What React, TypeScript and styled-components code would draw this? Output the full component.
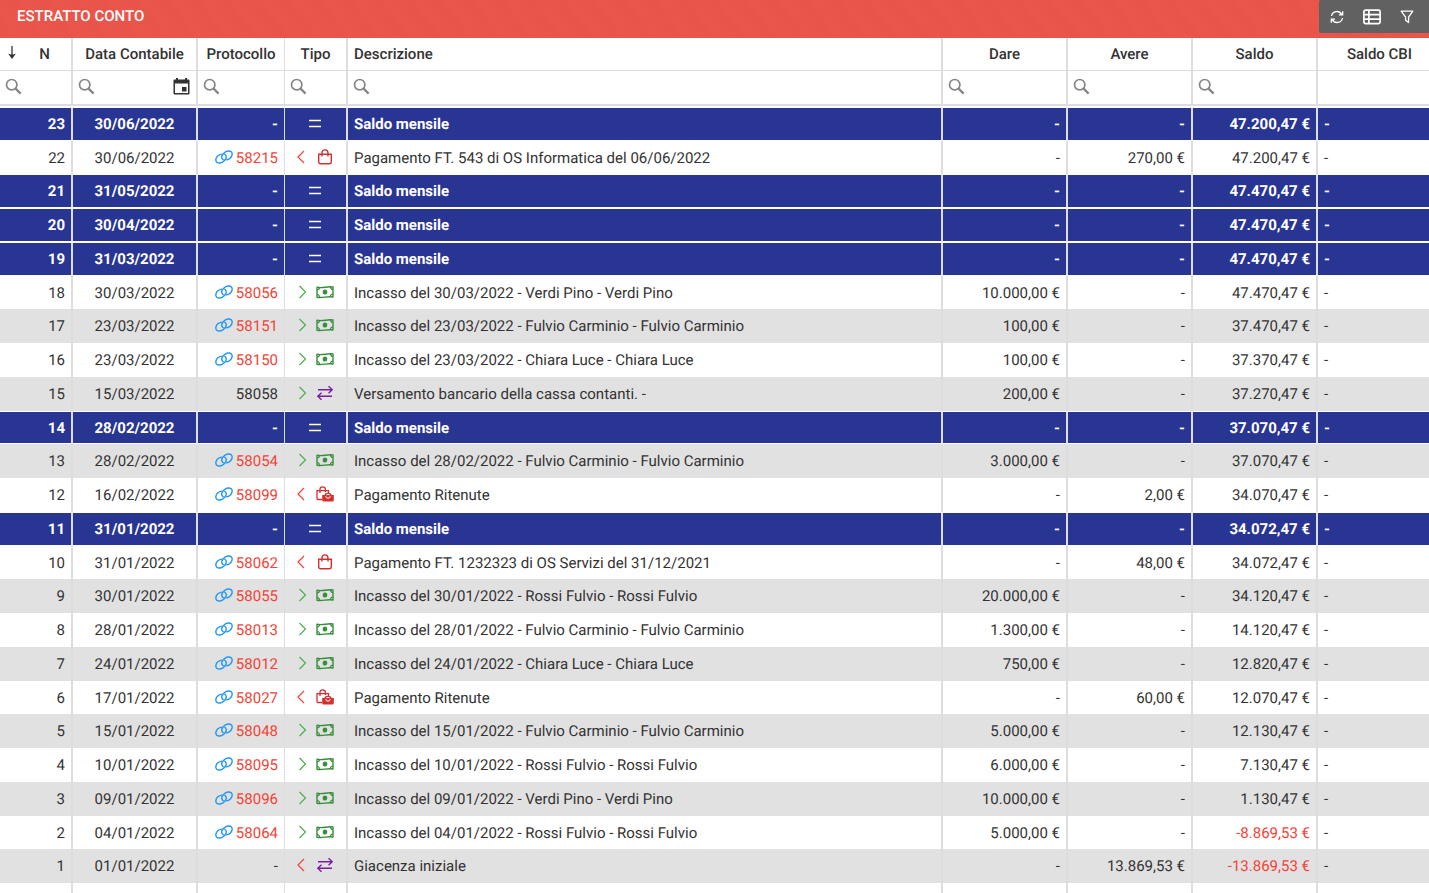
import React from "react";
import styled, { createGlobalStyle, css } from "styled-components";

const Global = createGlobalStyle`
  * { box-sizing: border-box; }
  body {
    margin: 0;
    background: #fff;
    color: #333;
    font-family: Roboto, "Liberation Sans", sans-serif;
    font-size: 15px;
    text-rendering: geometricPrecision;
  }
`;

const Page = styled.main`
  overflow: hidden;
  min-height: 100vh;
  display: flex;
  flex-direction: column;
`;

const TitleBar = styled.header`
  display: flex;
  justify-content: space-between;
  align-items: flex-start;
  height: 38px;
  padding-left: 17px;
  background: repeating-linear-gradient(52deg, #e9554b 0, #e8544a 8px, #ea564c 16px, #e9554b 24px);
`;

const Title = styled.h1`
  margin: 0;
  font-size: 15px;
  line-height: 32px;
  font-weight: 500;
  color: #fff;
`;

const Toolbar = styled.div`
  display: flex;
  align-items: center;
  height: 33px;
  width: 110px;
  padding-right: 4px;
  background: #616161;
  border-radius: 2px 0 0 2px;
`;

const ToolButton = styled.button`
  flex: 1;
  height: 32px;
  padding: 0;
  border: 0;
  background: none;
  color: #fff;
  display: flex;
  align-items: center;
  justify-content: center;
`;

const Table = styled.table`
  width: calc(100% + 13px);
  table-layout: fixed;
  border-collapse: separate;
  border-spacing: 0;
`;

type Align = "left" | "center" | "right";
type Edge = "none" | "wide";

const edges = css<{ $edge: Edge; $first?: boolean }>`
  border-style: solid;
  border-color: #ddd;
  border-width: 0;
  border-left-width: ${(p) => (p.$first || p.$edge === "none" ? 0 : 1)}px;
  border-right-width: 1px;
`;

const HeadCell = styled.th<{ $align: Align; $edge: Edge; $first?: boolean }>`
  ${edges}
  position: relative;
  height: 33px;
  padding: 0 6px 0 ${(p) => (p.$first ? 24 : 6)}px;
  border-bottom-width: 1px;
  font-weight: 500;
  line-height: 20px;
  text-align: ${(p) => p.$align};
  white-space: nowrap;
`;

const SortMark = styled.span`
  position: absolute;
  left: 7px;
  top: 7px;
  line-height: 0;
`;

const FilterCell = styled.td<{ $edge: Edge; $first?: boolean }>`
  ${edges}
  height: 35px;
  padding: 0 6px 2px 5px;
  border-bottom: 2px solid #ddd;
`;

const FilterBox = styled.label`
  display: flex;
  align-items: center;
  gap: 4px;
  color: #858585;
`;

const FilterInput = styled.input`
  flex: 1;
  min-width: 0;
  width: 0;
  height: 24px;
  padding: 0;
  border: 0;
  outline: 0;
  background: none;
  font: inherit;
`;

const DateButton = styled.button`
  padding: 0;
  border: 0;
  background: none;
  line-height: 0;
  color: #333;
`;

const Spacer = styled.tbody`
  td { height: 1px; padding: 0; }
`;

const Cell = styled.td<{ $align: Align; $edge: Edge; $first?: boolean; $negative?: boolean }>`
  ${edges}
  padding: 0 6px;
  line-height: 20px;
  text-align: ${(p) => p.$align};
  white-space: nowrap;
  color: ${(p) => (p.$negative ? "#f44336" : "inherit")};
`;

const Row = styled.tr<{ $tone: "monthly" | "plain" | "shaded" }>`
  height: 34px;
  &:nth-child(4n + 2) { height: 33px; }
  ${(p) => p.$tone === "shaded" && css`
    background: #e1e1e1;
  `}
  ${(p) => p.$tone === "monthly" && css`
    color: #fff;
    font-weight: 700;
    ${Cell} {
      background: #283593;
      background-clip: padding-box;
      border-top: 1px solid #fff;
      border-bottom: 1px solid #fff;
    }
  `}
`;

const Reference = styled.span`
  display: flex;
  align-items: center;
  justify-content: flex-end;
  gap: 3px;
`;

const DocLink = styled.a`
  color: #f44336;
  text-decoration: none;
`;

const Kind = styled.span`
  display: flex;
  align-items: center;
  justify-content: center;
  gap: 7px;
  padding: 0 2px 2px 0;
`;

const SearchIcon = () => (
  <svg width="17" height="17" viewBox="0 0 17 17" fill="none" stroke="currentColor" aria-hidden="true">
    <circle cx="6.7" cy="6.7" r="5.2" strokeWidth="1.7" />
    <path d="M10.6 10.6l5 5" strokeWidth="2.2" />
  </svg>
);

const SortIcon = () => (
  <svg width="10" height="15" viewBox="0 0 10 15" aria-hidden="true">
    <path d="M5 1v9" stroke="#333" strokeWidth="1.3" fill="none" />
    <path d="M1 8.6c1.4.9 2.6.9 4 .9s2.6 0 4-.9L5 14z" fill="#333" />
  </svg>
);

const CalendarIcon = () => (
  <svg width="17" height="17" viewBox="0 0 17 17" aria-hidden="true">
    <path fill="currentColor" fillRule="evenodd" d="M3 0h2v1.5h7V0h2v1.5h1.500q1 0 1 1v13q0 1-1 1h-14q-1 0-1-1v-13q0-1 1-1H3zM2 5.500V15h13V5.500zM9 9h4.500v4.500H9z" />
  </svg>
);

const RefreshIcon = () => (
  <svg width="14" height="14" viewBox="0 0 14 14" fill="none" stroke="currentColor" strokeWidth="1.3" aria-hidden="true">
    <path d="M1.5 6A5.400 5.400 0 0 1 11.600 4.400M12.700 1.200v3.700H9M12.500 8A5.400 5.400 0 0 1 2.400 9.600M1.300 12.800V9.100H5" />
  </svg>
);

const ListIcon = () => (
  <svg width="18" height="16" viewBox="0 0 18 16" fill="none" stroke="currentColor" strokeWidth="1.7" aria-hidden="true">
    <rect x="0.9" y="1.2" width="16.2" height="13.4" rx="1.6" />
    <path d="M1 5.600h16M1 10.100h16M5.900 1.200v13.400" />
  </svg>
);

const FunnelIcon = () => (
  <svg width="14" height="14" viewBox="0 0 14 14" fill="none" stroke="currentColor" strokeWidth="1.3" strokeLinejoin="round" aria-hidden="true">
    <path d="M1.200 1.200h11.600L8.600 7.200v5.400L5.600 10.200v-3z" />
  </svg>
);

const LinkIcon = () => (
  <svg width="18" height="16" viewBox="0 0 18 16" fill="none" stroke="#2196f3" strokeWidth="1.4" strokeLinecap="round" aria-hidden="true">
    <path d="M8.200 9.800C6.500 8.600 6.200 6.200 7.700 4.500L9.300 2.700C11.200.7 14.600.4 16.200 1.800c1.600 1.500 1.100 4.200-.8 6.100-1.300 1.300-2.600 1.900-4 2" />
    <path d="M9.800 4.200c1.700 1.200 2 3.600.5 5.300L8.700 11.300C6.800 13.300 3.400 13.600 1.800 12.200.2 10.700.7 8 2.600 6.100 3.900 4.800 5.200 4.200 6.600 4.100" />
  </svg>
);

const Chevron = ({ out }: { out?: boolean }) => (
  <svg width="14" height="16" viewBox="0 0 14 16" fill="none" stroke={out ? "#f44336" : "#4caf50"} strokeWidth="1.2" aria-hidden="true">
    <path d={out ? "M9 2L3 8l6 6" : "M4.500 2l6 6-6 6"} />
  </svg>
);

const CashIcon = () => (
  <svg width="18" height="16" viewBox="0 0 18 16" fill="none" stroke="#388e3c" aria-hidden="true">
    <path strokeWidth="1.4" strokeLinejoin="round" d="M1 3.200c5.300 1.500 10.700-1.300 16-.2v10c-5.300-1.300-10.700 1.400-16 .2z" />
    <path strokeWidth="1.1" d="M1 6q2.500-.1 2.600-2.400M17 5.500q-2.300 0-2.600-2.600M1 10.500q2.300 0 2.600 2.700M17 10q-2.500.1-2.600 2.500" />
    <ellipse cx="9" cy="8" rx="2.3" ry="2.6" fill="#388e3c" stroke="none" />
  </svg>
);

const BagIcon = () => (
  <svg width="18" height="16" viewBox="0 0 18 16" fill="none" stroke="#d32f2f" strokeWidth="1.4" aria-hidden="true">
    <path d="M2.700 5.300h12.600v7.500q0 2-2 2H4.700q-2 0-2-2zM6 7.500V4q0-3.100 3-3.100T12 4v3.500" />
  </svg>
);

const BagsIcon = () => (
  <svg width="18" height="16" viewBox="0 0 18 16" fill="none" stroke="#d32f2f" strokeWidth="1.3" aria-hidden="true">
    <path d="M6 13.500H2.200q-1.200 0-1.200-1.200V4.700h11.500V7M4 7V3.500Q4 .9 6.700.9t2.700 2.600V6" />
    <path fill="#d32f2f" stroke="none" d="M6.200 9h2.200q.4-2.200 3.600-2.200T15.600 9h2.200v5q0 1.500-1.500 1.500H7.700q-1.500 0-1.500-1.500z" />
    <path stroke="#fff" strokeWidth="1" d="M9.700 10.200q.2 2 2.300 2t2.300-2M10.300 8.800q1.700-1 3.400 0" />
  </svg>
);

const TransferIcon = () => (
  <svg width="18" height="16" viewBox="0 0 18 16" fill="none" stroke="#7b1fa2" strokeWidth="1.4" aria-hidden="true">
    <path d="M2 4.700h14M12.500 1.200L16.200 4.700l-3.700 3.500M16 11.300H2M5.500 7.800L1.800 11.300l3.700 3.500" />
  </svg>
);

const EqualsIcon = () => (
  <svg width="14" height="10" viewBox="0 0 14 10" stroke="#fff" strokeWidth="1.3" aria-hidden="true">
    <path d="M1 2.500h12M1 8.500h12" />
  </svg>
);

type Mark = "equals" | "cash" | "bag" | "bags" | "transfer";

interface Movement {
  n: number;
  date: string;
  doc?: string;
  plainDoc?: boolean;
  mark: Mark;
  out?: boolean;
  text: string;
  debit?: string;
  credit?: string;
  balance: string;
}

const monthly = (n: number, date: string, balance: string): Movement => ({ n, date, mark: "equals", text: "Saldo mensile", balance });
const income = (n: number, date: string, doc: string, who: string, debit: string, balance: string): Movement => ({
  n, date, doc, mark: "cash", text: `Incasso del ${date} - ${who} - ${who}`, debit, balance,
});
const payment = (n: number, date: string, doc: string, mark: Mark, text: string, credit: string, balance: string): Movement => ({
  n, date, doc, mark, out: true, text, credit, balance,
});

const movements: Movement[] = [
  monthly(23, "30/06/2022", "47.200,47"),
  payment(22, "30/06/2022", "58215", "bag", "Pagamento FT. 543 di OS Informatica del 06/06/2022", "270,00", "47.200,47"),
  monthly(21, "31/05/2022", "47.470,47"),
  monthly(20, "30/04/2022", "47.470,47"),
  monthly(19, "31/03/2022", "47.470,47"),
  income(18, "30/03/2022", "58056", "Verdi Pino", "10.000,00", "47.470,47"),
  income(17, "23/03/2022", "58151", "Fulvio Carminio", "100,00", "37.470,47"),
  income(16, "23/03/2022", "58150", "Chiara Luce", "100,00", "37.370,47"),
  { n: 15, date: "15/03/2022", doc: "58058", plainDoc: true, mark: "transfer", text: "Versamento bancario della cassa contanti. -", debit: "200,00", balance: "37.270,47" },
  monthly(14, "28/02/2022", "37.070,47"),
  income(13, "28/02/2022", "58054", "Fulvio Carminio", "3.000,00", "37.070,47"),
  payment(12, "16/02/2022", "58099", "bags", "Pagamento Ritenute", "2,00", "34.070,47"),
  monthly(11, "31/01/2022", "34.072,47"),
  payment(10, "31/01/2022", "58062", "bag", "Pagamento FT. 1232323 di OS Servizi del 31/12/2021", "48,00", "34.072,47"),
  income(9, "30/01/2022", "58055", "Rossi Fulvio", "20.000,00", "34.120,47"),
  income(8, "28/01/2022", "58013", "Fulvio Carminio", "1.300,00", "14.120,47"),
  income(7, "24/01/2022", "58012", "Chiara Luce", "750,00", "12.820,47"),
  payment(6, "17/01/2022", "58027", "bags", "Pagamento Ritenute", "60,00", "12.070,47"),
  income(5, "15/01/2022", "58048", "Fulvio Carminio", "5.000,00", "12.130,47"),
  income(4, "10/01/2022", "58095", "Rossi Fulvio", "6.000,00", "7.130,47"),
  income(3, "09/01/2022", "58096", "Verdi Pino", "10.000,00", "1.130,47"),
  income(2, "04/01/2022", "58064", "Rossi Fulvio", "5.000,00", "-8.869,53"),
  { n: 1, date: "01/01/2022", mark: "transfer", out: true, text: "Giacenza iniziale", credit: "13.869,53", balance: "-13.869,53" },
];

interface Column {
  label: string;
  width?: number;
  align: Align;
  headAlign: Align;
  edge: Edge;
  filter: boolean;
}

const columns: Column[] = [
  { label: "N", width: 72, align: "right", headAlign: "center", edge: "wide", filter: true },
  { label: "Data Contabile", width: 125, align: "center", headAlign: "center", edge: "wide", filter: true },
  { label: "Protocollo", width: 88, align: "right", headAlign: "center", edge: "wide", filter: true },
  { label: "Tipo", width: 62, align: "center", headAlign: "center", edge: "none", filter: true },
  { label: "Descrizione", align: "left", headAlign: "left", edge: "wide", filter: true },
  { label: "Dare", width: 125, align: "right", headAlign: "center", edge: "wide", filter: true },
  { label: "Avere", width: 125, align: "right", headAlign: "center", edge: "wide", filter: true },
  { label: "Saldo", width: 125, align: "right", headAlign: "center", edge: "wide", filter: true },
  { label: "Saldo CBI", width: 125, align: "left", headAlign: "center", edge: "wide", filter: false },
];

const markIcons: Record<Mark, () => React.ReactElement> = {
  equals: EqualsIcon,
  cash: CashIcon,
  bag: BagIcon,
  bags: BagsIcon,
  transfer: TransferIcon,
};

const amount = (value?: string) => (value ? `${value} €` : "-");

function MovementRow({ item, index }: { item: Movement; index: number }) {
  const Icon = markIcons[item.mark];
  const isMonthly = item.mark === "equals";
  const reference = !item.doc ? "-" : item.plainDoc ? item.doc : (
    <Reference>
      <LinkIcon />
      <DocLink href={`#${item.doc}`}>{item.doc}</DocLink>
    </Reference>
  );
  const kind = (
    <Kind>
      {!isMonthly && <Chevron out={item.out} />}
      <Icon />
    </Kind>
  );
  const values = [item.n, item.date, reference, kind, item.text, amount(item.debit), amount(item.credit), amount(item.balance), "-"];
  return (
    <Row $tone={isMonthly ? "monthly" : index % 2 === 0 ? "shaded" : "plain"}>
      {values.map((value, i) => (
        <Cell key={columns[i].label} $align={columns[i].align} $edge={columns[i].edge} $first={i === 0} $negative={i === 7 && item.balance.startsWith("-")}>
          {value}
        </Cell>
      ))}
    </Row>
  );
}

export default function App() {
  return (
    <Page>
      <Global />
      <TitleBar>
        <Title>ESTRATTO CONTO</Title>
        <Toolbar>
          <ToolButton aria-label="Aggiorna"><RefreshIcon /></ToolButton>
          <ToolButton aria-label="Colonne"><ListIcon /></ToolButton>
          <ToolButton aria-label="Filtra"><FunnelIcon /></ToolButton>
        </Toolbar>
      </TitleBar>
      <Table>
        <colgroup>
          {columns.map((c) => <col key={c.label} width={c.width} />)}
        </colgroup>
        <thead>
          <tr>
            {columns.map((c, i) => (
              <HeadCell key={c.label} scope="col" $align={c.headAlign} $edge={c.edge} $first={i === 0}>
                {i === 0 && <SortMark><SortIcon /></SortMark>}
                {c.label}
              </HeadCell>
            ))}
          </tr>
          <tr>
            {columns.map((c, i) => (
              <FilterCell key={c.label} $edge={c.edge} $first={i === 0}>
                {c.filter && (
                  <FilterBox>
                    <SearchIcon />
                    <FilterInput aria-label={`Filtra ${c.label}`} />
                    {i === 1 && <DateButton aria-label="Scegli data"><CalendarIcon /></DateButton>}
                  </FilterBox>
                )}
              </FilterCell>
            ))}
          </tr>
        </thead>
        <Spacer aria-hidden="true"><tr><td colSpan={9} /></tr></Spacer>
        <tbody>
          {movements.map((item, index) => <MovementRow key={item.n} item={item} index={index} />)}
          <Row $tone="plain">
            {columns.map((c, i) => <Cell key={c.label} $align={c.align} $edge={c.edge} $first={i === 0} />)}
          </Row>
        </tbody>
      </Table>
    </Page>
  );
}
